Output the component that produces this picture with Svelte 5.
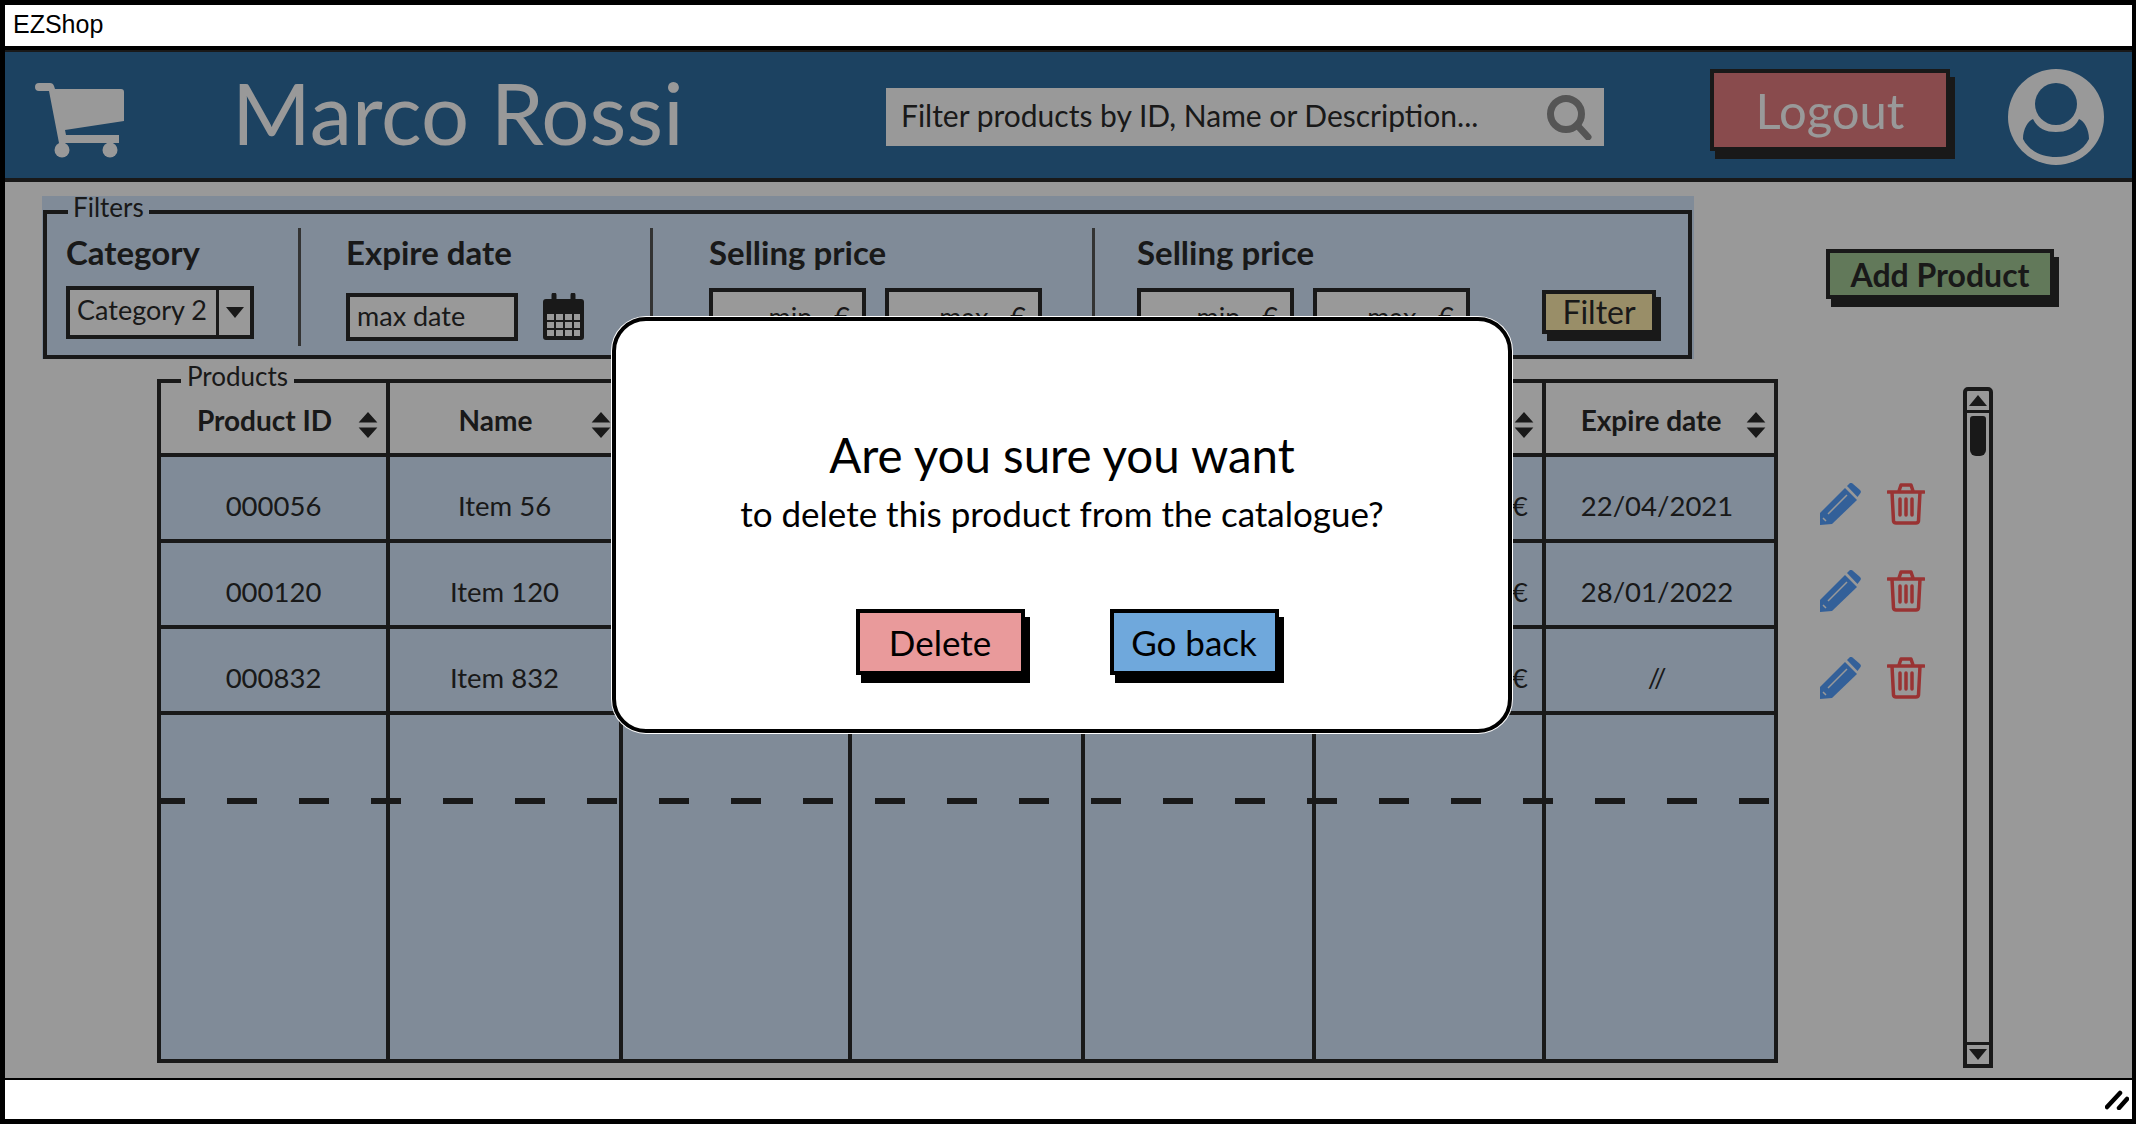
<script>
  const rows = [
    { id: '000056', name: 'Item 56', date: '22/04/2021' },
    { id: '000120', name: 'Item 120', date: '28/01/2022' },
    { id: '000832', name: 'Item 832', date: '//' }
  ];
  const heads = ['Product ID', 'Name', 'Description', 'Quantity', 'Purchase price', 'Selling price', 'Expire date'];
  const priceBlocks = [0, 1];
</script>

{#snippet sortIcon()}
  <svg class="sort" viewBox="0 0 18 25" aria-hidden="true"><path d="M9 0 18 10H0ZM0 15H18L9 25Z" /></svg>
{/snippet}

<div class="window">
  <div class="titlebar">EZShop</div>

  <div class="dimmed">
    <header class="topbar">
      <svg class="cart" viewBox="0 0 90 75" aria-hidden="true">
        <path d="M0 4Q0 0 4 0H15Q18 0 19 3L20 6H86Q89 6 89 9V38L30 47 31 52H84V60H24L14 8H4Q0 8 0 4Z" />
        <circle cx="27" cy="67" r="7.5" /><circle cx="75" cy="67" r="7.5" />
      </svg>
      <h1 class="user">Marco Rossi</h1>
      <div class="search">
        <span>Filter products by ID, Name or Description...</span>
        <svg viewBox="0 0 46 46" aria-hidden="true"><circle cx="20" cy="20" r="15.5" /><path d="M31 31 42 43" /></svg>
      </div>
      <button class="btn logout">Logout</button>
      <svg class="avatar" viewBox="0 0 96 96" aria-hidden="true">
        <circle class="a-bg" cx="48" cy="48" r="48" />
        <ellipse class="a-fg" cx="48" cy="35" rx="21" ry="21" />
        <path class="a-fg" d="M15 70C15 60 20 52 25 50 30 60 38 63 48 63 58 63 66 60 71 50 76 52 81 60 81 70 75 82 62 88 48 88 34 88 21 82 15 70Z" />
      </svg>
    </header>

    <main class="content">
      <div class="row-top">
        <div class="filter-bg">
          <fieldset class="filters">
            <legend>Filters</legend>
            <div class="fsec sec-cat">
              <div class="flabel">Category</div>
              <div class="combo"><span>Category 2</span><i><b class="tri-down"></b></i></div>
            </div>
            <div class="fsec sec-date">
              <div class="flabel">Expire date</div>
              <div class="date-row">
                <div class="field date-field">max date</div>
                <svg class="calendar" viewBox="0 0 45 47" aria-hidden="true">
                  <path d="M2 9Q2 6 5 6H40Q43 6 43 9V44Q43 47 40 47H5Q2 47 2 44Z" />
                  <path class="cal-ring" d="M13 2V11M32 2V11" />
                  <path class="cal-grid" d="M5 20H40V44H5ZM5 28H40M5 36H40M14 20V44M23 20V44M32 20V44" />
                </svg>
              </div>
            </div>
            {#each priceBlocks as b}
              <div class="fsec" class:sec-p1={b === 0} class:sec-p2={b === 1}>
                <div class="flabel">Selling price</div>
                <div class="price-row">
                  <div class="field price"><span>min</span><span>€</span></div>
                  <div class="field price"><span>max</span><span>€</span></div>
                  {#if b === 1}<button class="btn filter">Filter</button>{/if}
                </div>
              </div>
            {/each}
          </fieldset>
        </div>
        <button class="btn add">Add Product</button>
      </div>

      <div class="row-main">
        <fieldset class="products">
          <legend>Products</legend>
          <div class="grid">
            {#each heads as h}
              <div class="th"><span>{h}</span>{@render sortIcon()}</div>
            {/each}
            {#each rows as r}
              <div class="td">{r.id}</div>
              <div class="td">{r.name}</div>
              <div class="td"></div>
              <div class="td"></div>
              <div class="td"></div>
              <div class="td euro">€</div>
              <div class="td date">{r.date}</div>
            {/each}
            <div class="blank-row dashed">
              {#each heads as h}<div class="col"></div>{/each}
            </div>
            <div class="blank-row">
              {#each heads as h}<div class="col"></div>{/each}
            </div>
          </div>
        </fieldset>

        <div class="actions">
          {#each rows as r}
            <div class="action-row">
              <svg class="pencil" viewBox="0 0 42 42" aria-hidden="true">
                <path d="M0 30 25 5 37 17 12 41 0 42Z" />
                <path d="M27 3 30 0Q31-.5 32.500 .5L40 7Q41.500 8.500 40.500 10L37.500 14Z" />
                <path class="pen-line" d="M8 31 27 12M3 35 6 38" />
              </svg>
              <svg class="trash" viewBox="0 0 38 42" aria-hidden="true">
                <path d="M1 9H37M5 9 6.500 38Q7 40 9 40H29Q31 40 31.500 38L33 9M12 8 14 2H24L26 8M13 16V32M19 16V32M25 16V32" />
              </svg>
            </div>
          {/each}
        </div>

        <div class="scrollbar">
          <div class="sb-btn up"><b class="tri-up"></b></div>
          <div class="sb-track"><div class="thumb"></div></div>
          <div class="sb-btn down"><b class="tri-down"></b></div>
        </div>
      </div>
    </main>

    <div class="overlay"></div>
  </div>

  <footer class="statusbar">
    <svg viewBox="0 0 24 20" aria-hidden="true"><path d="M2 17 15 3M14 18 22 9" /></svg>
  </footer>

  <div class="modal" role="dialog">
    <h2>Are you sure you want</h2>
    <p>to delete this product from the catalogue?</p>
    <div class="modal-actions">
      <button class="btn m-delete">Delete</button>
      <button class="btn m-back">Go back</button>
    </div>
  </div>
</div>

<style>
  :global(body) { margin: 0; background: #fff; }
  * { box-sizing: border-box; }

  .window {
    position: relative;
    width: 2136px;
    height: 1124px;
    display: flex;
    flex-direction: column;
    border: 5px solid #000;
    border-right-width: 4px;
    font-family: Lato, "Noto Sans", sans-serif;
    color: #2b2b2b;
    overflow: hidden;
  }
  .titlebar {
    height: 45px;
    flex: none;
    padding-left: 8px;
    border-bottom: 4px solid #000;
    font: 25px/39px "Liberation Sans", Arial, sans-serif;
    color: #000;
    background: #fff;
  }
  .dimmed { position: relative; flex: 1; display: flex; flex-direction: column; min-height: 0; }
  .overlay { position: absolute; inset: 0; background: rgba(0, 0, 0, .4); }

  .topbar {
    flex: none;
    height: 132px;
    display: flex;
    align-items: flex-start;
    background: #2f6ea2;
    border-top: 2px solid #2b2b2b;
    border-bottom: 4px solid #2b2b2b;
  }
  .cart { width: 90px; height: 75px; margin: 31px 0 0 30px; fill: #fff; flex: none; }
  .user {
    width: 654px;
    margin: 12px 0 0 107px;
    font-size: 85px;
    line-height: 96px;
    font-weight: 400;
    color: #fff;
    white-space: nowrap;
  }
  .search {
    width: 718px;
    height: 58px;
    margin-top: 36px;
    padding: 0 12px 0 15px;
    background: #fff;
    display: flex;
    align-items: center;
    justify-content: space-between;
    font-size: 30px;
    white-space: nowrap;
  }
  .search span { margin-top: -5px; }
  .search svg { width: 46px; height: 46px; fill: none; stroke: #8e8e8e; stroke-width: 7; stroke-linecap: round; flex: none; }

  .btn {
    display: block;
    font-family: inherit;
    color: inherit;
    border: 4px solid #2b2b2b;
    padding: 0;
    box-shadow: 5px 8px 0 #2b2b2b;
    white-space: nowrap;
    cursor: pointer;
  }
  .logout {
    width: 240px;
    height: 82px;
    margin: 17px 0 0 106px;
    background: #e47d80;
    color: #fff;
    font-size: 49px;
    flex: none;
  }
  .avatar { width: 96px; height: 96px; margin: 17px 0 0 58px; flex: none; }
  .a-bg { fill: #fff; }
  .a-fg { fill: #2f6ea2; }

  .content { flex: 1; min-height: 0; display: flex; flex-direction: column; background: #fff; }
  .row-top { flex: none; display: flex; align-items: flex-start; padding: 14px 0 0 37px; }
  .filter-bg { width: 1652px; height: 163px; flex: none; background: #d5e8fd; padding: 0 2px 0 1px; }
  .filters {
    height: 100%;
    margin: 0;
    padding: 0;
    min-width: 0;
    display: grid;
    grid-template-columns: 251px 352px 442px 1fr;
    border: 4px solid #2b2b2b;
  }
  legend {
    margin-left: 21px;
    padding: 0 5px;
    font-size: 26px;
    line-height: 22px;
    height: 32px;
  }
  .fsec { height: 118px; border-left: 3px solid #555; }
  .sec-cat { border-left: 0; padding-left: 19px; }
  .sec-date { padding-left: 45px; }
  .sec-p1 { padding-left: 56px; }
  .sec-p2 { padding-left: 42px; }
  .flabel { font-size: 33px; font-weight: 700; line-height: 40px; white-space: nowrap; padding: 4px 0 14px; height: 58px; }
  .combo {
    width: 188px;
    height: 53px;
    display: flex;
    background: #fff;
    border: 4px solid #2b2b2b;
    font-size: 27px;
    line-height: 40px;
  }
  .combo span { flex: 1; padding-left: 7px; white-space: nowrap; }
  .combo i { width: 34px; flex: none; border-left: 3px solid #2b2b2b; display: flex; align-items: center; justify-content: center; }
  .tri-down, .tri-up { display: block; width: 0; height: 0; border-left: 9px solid transparent; border-right: 9px solid transparent; }
  .tri-down { border-top: 11px solid #2b2b2b; }
  .tri-up { border-bottom: 11px solid #2b2b2b; }

  .date-row { display: flex; align-items: flex-start; gap: 23px; margin-top: 7px; }
  .field { background: #fff; border: 4px solid #2b2b2b; font-size: 27px; white-space: nowrap; }
  .date-field { width: 172px; height: 48px; line-height: 38px; padding-left: 7px; }
  .calendar { width: 45px; height: 47px; flex: none; }
  .calendar > path:first-child { fill: #2b2b2b; }
  .cal-ring { fill: none; stroke: #2b2b2b; stroke-width: 5; stroke-linecap: round; }
  .cal-grid { fill: #fff; stroke: #2b2b2b; stroke-width: 2; fill-rule: evenodd; }

  .price-row { display: flex; align-items: flex-start; gap: 19px; margin-top: 2px; }
  .price { width: 157px; height: 52px; padding-right: 12px; display: flex; justify-content: flex-end; gap: 22px; line-height: 50px; }
  .filter { width: 114px; height: 44px; margin: 2px 0 0 53px; background: #ffedad; font-size: 32px; box-shadow: 5px 7px 0 #2b2b2b; line-height: 32px; }
  .add {
    width: 228px;
    height: 50px;
    margin: 53px 0 0 132px;
    background: #a3ca96;
    font-size: 32px;
    font-weight: 700;
    flex: none;
  }

  .row-main { flex: 1; min-height: 0; display: flex; align-items: stretch; padding: 6px 0 10px 152px; }
  .products { width: 1621px; margin: 0 0 5px; padding: 0; min-width: 0; flex: none; border: 4px solid #2b2b2b; display: flex; }
  .products legend { margin-left: 20px; padding: 0 6px; }
  .grid {
    flex: 1;
    display: grid;
    grid-template-columns: 229px 233px 229px 233px 231px 230px 1fr;
    grid-template-rows: 75px 86px 86px 86px 89px 1fr;
    height: calc(100% + 15px);
    margin-top: -15px;
  }
  .th, .td { border-right: 4px solid #2b2b2b; border-bottom: 4px solid #2b2b2b; min-width: 0; }
  .th:nth-child(7), .td:nth-child(7n) { border-right: 0; }
  .th { display: flex; align-items: center; padding: 15px 8px 0 10px; font-size: 28px; font-weight: 700; }
  .th span { flex: 1; text-align: center; white-space: nowrap; margin-top: -10px; }
  .sort { width: 20px; height: 26px; fill: #2b2b2b; flex: none; }
  .td { background: #d5e8fd; display: flex; align-items: center; justify-content: center; padding-top: 14px; font-size: 27.500px; }
  .date { padding-right: 6px; }
  .euro { justify-content: flex-end; padding-right: 14px; }
  .blank-row {
    grid-column: 1 / -1;
    display: grid;
    grid-template-columns: subgrid;
    background: #d5e8fd;
  }
  .dashed {
    background:
      repeating-linear-gradient(90deg, #2b2b2b 0 30px, transparent 30px 72px) -6px 100% / calc(100% + 6px) 6px no-repeat,
      #d5e8fd;
  }
  .col { border-right: 4px solid #2b2b2b; }
  .col:last-child { border-right: 0; }

  .actions { width: 105px; flex: none; margin-left: 42px; padding-top: 118px; display: flex; flex-direction: column; gap: 45px; }
  .action-row { display: flex; justify-content: space-between; }
  .pencil { width: 42px; height: 42px; fill: #55a0ff; }
  .pen-line { fill: none; stroke: #fff; stroke-width: 1.500; }
  .trash { width: 38px; height: 42px; fill: none; stroke: #ff5555; stroke-width: 3.500; stroke-linecap: round; stroke-linejoin: round; }

  .scrollbar {
    width: 30px;
    flex: none;
    margin: 22px 0 0 38px;
    border: 4px solid #2b2b2b;
    border-radius: 5px 5px 0 0;
    display: flex;
    flex-direction: column;
    background: #fff;
  }
  .sb-btn { height: 22px; flex: none; display: flex; align-items: center; justify-content: center; }
  .sb-btn.up { border-bottom: 3px solid #2b2b2b; }
  .sb-btn.down { border-top: 3px solid #2b2b2b; }
  .sb-track { flex: 1; padding: 3px 3px 0; }
  .thumb { height: 40px; background: #2b2b2b; border-radius: 3px 3px 6px 6px; }

  .statusbar {
    height: 41px;
    flex: none;
    display: flex;
    justify-content: flex-end;
    align-items: center;
    padding-right: 3px;
    border-top: 2px solid #000;
    background: #fff;
  }
  .statusbar svg { width: 24px; height: 20px; fill: none; stroke: #000; stroke-width: 4.500; stroke-linecap: round; }

  .modal {
    position: absolute;
    left: 607px;
    top: 312px;
    width: 900px;
    height: 416px;
    background: #fff;
    color: #000;
    border: 4px solid #000;
    border-radius: 34px;
    box-shadow: 0 0 0 1px #fff;
    display: flex;
    flex-direction: column;
    align-items: center;
    padding-top: 106px;
  }
  .modal h2 { margin: 0; font-size: 47.500px; line-height: 56px; font-weight: 400; white-space: nowrap; }
  .modal p { margin: 9px 0 0; font-size: 35px; line-height: 42px; white-space: nowrap; }
  .modal-actions { display: flex; gap: 85px; margin: 75px 0 0 10px; }
  .m-delete, .m-back { width: 169px; height: 66px; border-color: #000; box-shadow: 5px 8px 0 #000; color: #000; font-size: 35px; }
  .m-delete { background: #e99a9b; }
  .m-back { background: #6fa8dc; }
</style>
